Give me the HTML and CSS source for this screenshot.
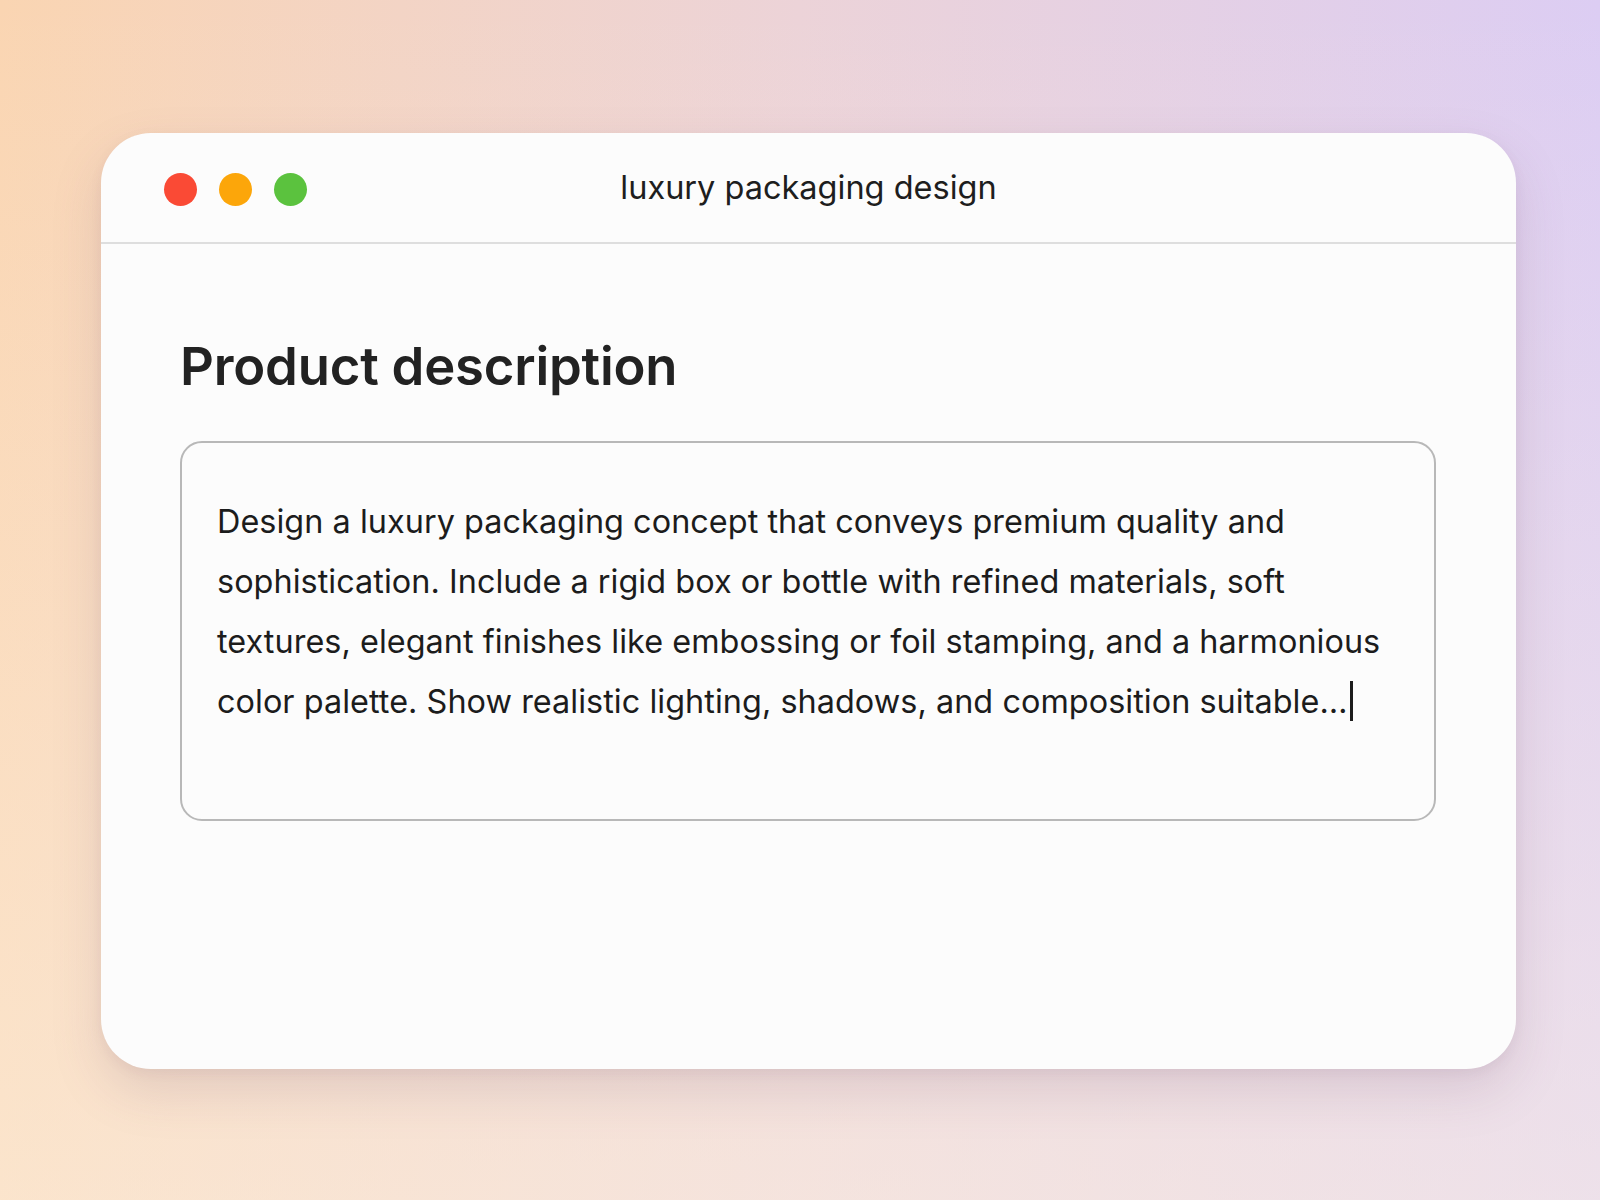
FILE: index.html
```html
<!DOCTYPE html>
<html lang="en">
<head>
<meta charset="utf-8">
<title>luxury packaging design</title>
<link rel="stylesheet" href="styles.css">
</head>
<body>
<div class="stage">
  <div class="window">
    <div class="titlebar">
      <div class="lights">
        <span class="light red"></span>
        <span class="light yellow"></span>
        <span class="light green"></span>
      </div>
      <div class="title">luxury packaging design</div>
    </div>
    <div class="content">
      <h1 class="heading">Product description</h1>
      <div class="field">
        <p class="field-text">Design a luxury packaging concept that conveys premium quality and<br>sophistication. Include a rigid box or bottle with refined materials, soft<br>textures, elegant finishes like embossing or foil stamping, and a harmonious<br>color palette. Show realistic lighting, shadows, and composition suitable…<span class="caret"></span></p>
      </div>
    </div>
  </div>
</div>
</body>
</html>
```
FILE: styles.css
```css
* { box-sizing: border-box; }
html, body { margin: 0; padding: 0; }
body {
  width: 1600px;
  height: 1200px;
  overflow: hidden;
  font-family: Inter, "Noto Sans", sans-serif;
  background: #f6dccb;
}
.stage {
  position: relative;
  width: 1600px;
  height: 1200px;
  padding: 133px 0 0 101px;
  background:
    linear-gradient(to bottom, rgba(252,241,226,0) 0%, rgba(252,241,226,0.55) 100%),
    linear-gradient(to right, #fad5b2 0%, #ecd3d8 50%, #dccdf3 100%);
}
.window {
  width: 1415px;
  height: 936px;
  background: #fcfcfc;
  border-radius: 50px;
  box-shadow: 0 22px 50px rgba(130, 95, 120, 0.18), 0 4px 12px rgba(130, 95, 120, 0.08);
  overflow: hidden;
}
.titlebar {
  position: relative;
  height: 111px;
  border-bottom: 2px solid #dedede;
  display: flex;
  align-items: center;
  justify-content: center;
}
.lights {
  position: absolute;
  left: 63px;
  top: 40px;
  display: flex;
  gap: 22px;
}
.light {
  width: 33px;
  height: 33px;
  border-radius: 50%;
  display: block;
}
.red { background: #fa4a35; }
.yellow { background: #fca60a; }
.green { background: #5bc23e; }
.title {
  font-size: 32.5px;
  color: #1e1e1e;
  margin-top: -1px;
  letter-spacing: 0;
}
.content {
  padding: 91px 80px 0 79px;
}
.heading {
  margin: 0;
  font-size: 52.6px;
  font-weight: 600;
  line-height: 62px;
  color: #222222;
  letter-spacing: -0.2px;
}
.field {
  margin-top: 44px;
  height: 380px;
  border: 2px solid #b8b8b8;
  border-radius: 22px;
  padding: 49px 30px 0 35px;
}
.field-text {
  margin: 0;
  font-size: 32.4px;
  line-height: 60px;
  color: #1c1c1c;
  letter-spacing: 0.04px;
}
.caret {
  display: inline-block;
  width: 3px;
  height: 40px;
  background: #1c1c1c;
  vertical-align: -8px;
  margin-left: 3px;
}
```
